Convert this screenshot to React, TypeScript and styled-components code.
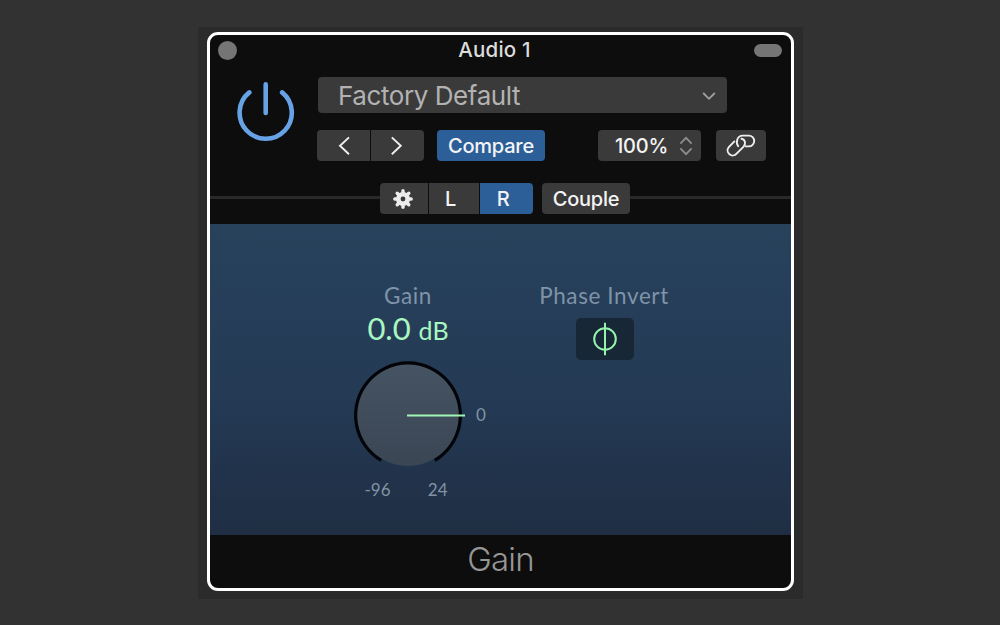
import { useState } from "react";
import styled, { createGlobalStyle } from "styled-components";

const GlobalStyle = createGlobalStyle`
  * {
    box-sizing: border-box;
  }
  body {
    margin: 0;
    background: #323232;
    font-family: Inter, "Liberation Sans", sans-serif;
  }
  button {
    font-family: inherit;
    border: none;
    padding: 0;
    margin: 0;
    cursor: pointer;
  }
  svg {
    display: block;
    flex: none;
  }
`;

const Desktop = styled.main`
  height: 625px;
  display: flex;
  flex-direction: column;
  align-items: flex-start;
  padding: 27px 0 0 198px;
  overflow: hidden;
`;

const Backdrop = styled.div`
  width: 605px;
  height: 572px;
  padding: 5px 9px 8px;
  background: #2b2b2b;
`;

const PluginWindow = styled.section`
  width: 587px;
  height: 559px;
  display: flex;
  flex-direction: column;
  border: 3px solid #fff;
  border-radius: 11px;
  background: #0d0d0d;
  overflow: hidden;
`;

const TitleBar = styled.header`
  height: 31px;
  display: grid;
  grid-template-columns: 28px 1fr 28px;
  align-items: center;
  padding: 0 9px 0 8px;
`;

const Title = styled.h1`
  margin: 0;
  padding: 0 11px 2px 0;
  text-align: center;
  font-size: 20.5px;
  line-height: 28px;
  font-weight: 450;
  letter-spacing: 0.2px;
  color: #dcdcdc;
`;

const CloseDot = styled.button`
  width: 19px;
  height: 19px;
  border-radius: 50%;
  background: #757575;
`;

const Pill = styled.button`
  width: 28px;
  height: 13px;
  border-radius: 7px;
  background: #757575;
`;

const Header = styled.div`
  height: 117px;
  display: flex;
  padding: 11px 0 0 24px;
`;

const PowerButton = styled.button`
  width: 64px;
  height: 68px;
  background: none;
`;

const Controls = styled.div`
  padding-left: 20px;
`;

const Preset = styled.button`
  width: 409px;
  height: 36px;
  display: flex;
  align-items: center;
  justify-content: space-between;
  padding: 1px 11px 0 20px;
  border-radius: 4px;
  background: #3a3a3a;
  color: #b2b2b2;
  font-size: 26px;
  letter-spacing: -0.42px;
`;

const ControlRow = styled.div`
  display: flex;
  margin: 17px 0 0 -1px;
`;

const Button = styled.button<{
  $w: number;
  $gap?: number;
  $shift?: number;
  $active?: boolean;
  $edge?: "left" | "mid" | "right";
}>`
  width: ${(p) => p.$w}px;
  height: 31px;
  margin-left: ${(p) => p.$gap ?? 0}px;
  padding-right: ${(p) => p.$shift ?? 0}px;
  display: flex;
  align-items: center;
  justify-content: center;
  border-radius: ${(p) =>
    p.$edge === "left" ? "4px 0 0 4px" : p.$edge === "mid" ? "0" : p.$edge === "right" ? "0 4px 4px 0" : "4px"};
  background: ${(p) => (p.$active ? "#2c5f98" : "#3a3a3a")};
  color: #f4f4f4;
  font-size: 20px;
  font-weight: 500;
  letter-spacing: -0.25px;
`;

const AmountButton = styled(Button)`
  justify-content: flex-end;
  gap: 11px;
  padding-right: 8px;
`;

const ChannelRow = styled.div`
  height: 41px;
  display: flex;
  align-items: flex-start;
`;

const Rule = styled.div<{ $w?: number }>`
  flex: ${(p) => (p.$w ? `0 0 ${p.$w}px` : "1")};
  height: 3px;
  margin-top: 13px;
  background: #292929;
`;

const Panel = styled.div`
  height: 311px;
  display: grid;
  grid-template-columns: 196px 196px;
  padding: 58px 0 0 100px;
  background: linear-gradient(#28425c, #243a55 55%, #1f2e43);
  font-family: Lato, "Open Sans", sans-serif;
`;

const Param = styled.div`
  display: flex;
  flex-direction: column;
  align-items: center;
`;

const Label = styled.div`
  height: 28px;
  line-height: 28px;
  font-size: 22.5px;
  letter-spacing: 0.6px;
  white-space: nowrap;
  color: #7f93a9;
`;

const Value = styled.div`
  height: 38px;
  line-height: 37px;
  font-size: 31px;
  color: #a9f7c0;
  white-space: nowrap;

  small {
    font-size: 25px;
  }
`;

const KnobRow = styled.div`
  display: grid;
  grid-template-columns: 1fr 110px 1fr;
  align-items: center;
  width: 100%;
  margin-top: 12px;
`;

const Tick = styled.span`
  font-size: 17px;
  line-height: 22px;
  color: #8293a5;
`;

const ZeroTick = styled(Tick)`
  padding-left: 13px;
`;

const Range = styled.div`
  display: flex;
  justify-content: space-between;
  width: 83px;
  margin: 9px 4px 0 0;
`;

const PhaseButton = styled.button`
  width: 58px;
  height: 42px;
  display: flex;
  align-items: center;
  justify-content: center;
  margin: 8px 0 0 1px;
  padding-left: 1px;
  border-radius: 5px;
  background: #182736;
`;

const Footer = styled.footer`
  flex: 1;
  text-align: center;
  font-size: 33px;
  line-height: 48px;
  font-weight: 300;
  letter-spacing: -0.8px;
  color: #969696;
`;

const PowerIcon = () => (
  <svg width="64" height="68" viewBox="0 0 64 68" fill="none" stroke="#68a2e6" strokeWidth="4.6" strokeLinecap="round">
    <path d="M31.7 7.4V36" />
    <path d="M15.3 15.4A26.1 26.1 0 1 0 48.1 15.4" />
  </svg>
);

const ChevronIcon = () => (
  <svg width="14" height="10" viewBox="0 0 14 10" fill="none" stroke="#a0a0a0" strokeWidth="1.8">
    <path d="M1.2 2L7 7.8L12.8 2" />
  </svg>
);

const ArrowIcon = ({ flip }: { flip?: boolean }) => (
  <svg width="12" height="20" viewBox="0 0 12 20" fill="none" stroke="#f0f0f0" strokeWidth="1.9">
    <path d={flip ? "M0.8 1.4L9.8 9.8L0.8 18.2" : "M11 1.4L2 9.8L11 18.2"} />
  </svg>
);

const StepperIcon = () => (
  <svg width="14" height="20" viewBox="0 0 14 20" fill="none" stroke="#8e8e8e" strokeWidth="1.8">
    <path d="M1.4 7.6L7 1.8L12.6 7.6M1.4 12.4L7 18.2L12.6 12.4" />
  </svg>
);

const LinkIcon = () => (
  <svg width="30" height="23" viewBox="0 0 30 23" fill="none" stroke="#eee" strokeWidth="1.9" strokeLinecap="round">
    <path d="M12.2 12.2C9.4 8.4 11.2 1.6 16.6 1.6H22.8A5.4 5.4 0 0 1 22.8 12.4H19.8" />
    <path d="M15.4 4.8C19.4 5.6 20.2 10 17.4 12.8L10.6 19.6A4.8 4.8 0 0 1 2.8 13.2L8.4 7.4" />
  </svg>
);

const GearIcon = () => (
  <svg width="20" height="20" viewBox="-10 -10 20 20">
    <g stroke="#ececec" strokeWidth="3.4" strokeLinecap="round">
      {[0, 45, 90, 135].map((a) => (
        <path key={a} d="M0 -8.2V8.2" transform={`rotate(${a})`} />
      ))}
    </g>
    <circle r="7" fill="#ececec" />
    <circle r="2.4" fill="#3a3a3a" />
  </svg>
);

const Knob = () => (
  <svg width="110" height="110" viewBox="0 0 110 110" fill="none" overflow="visible">
    <defs>
      <linearGradient id="knob" x1="0" y1="0" x2="0" y2="1">
        <stop offset="0" stopColor="#465362" />
        <stop offset="1" stopColor="#3a4654" />
      </linearGradient>
    </defs>
    <circle cx="55" cy="55" r="51" fill="url(#knob)" />
    <path d="M28.2 100.4A52.4 52.4 0 1 1 81.8 100.4" stroke="#020407" strokeWidth="3.2" />
    <path d="M54 55.5H112" stroke="#9ff5b4" strokeWidth="1.8" />
  </svg>
);

const PhaseIcon = () => (
  <svg width="28" height="34" viewBox="0 0 28 34" fill="none" stroke="#95f3ad" strokeWidth="2">
    <circle cx="14" cy="17" r="10.8" />
    <path d="M14 0.8V33.2" />
  </svg>
);

export default function App() {
  const [channel, setChannel] = useState("R");
  const [compare, setCompare] = useState(true);

  return (
    <Desktop>
      <GlobalStyle />
      <Backdrop>
        <PluginWindow>
          <TitleBar>
            <CloseDot />
            <Title>Audio 1</Title>
            <Pill />
          </TitleBar>
          <Header>
            <PowerButton>
              <PowerIcon />
            </PowerButton>
            <Controls>
              <Preset>
                Factory Default
                <ChevronIcon />
              </Preset>
              <ControlRow>
                <Button $w={53} $edge="left">
                  <ArrowIcon />
                </Button>
                <Button $w={53} $gap={1} $shift={2} $edge="right">
                  <ArrowIcon flip />
                </Button>
                <Button $w={108} $gap={13} $active={compare} onClick={() => setCompare(!compare)}>
                  Compare
                </Button>
                <AmountButton $w={103} $gap={53}>
                  100%
                  <StepperIcon />
                </AmountButton>
                <Button $w={50} $gap={15} $shift={1}>
                  <LinkIcon />
                </Button>
              </ControlRow>
            </Controls>
          </Header>
          <ChannelRow>
            <Rule $w={170} />
            <Button $w={48} $edge="left" $shift={2}>
              <GearIcon />
            </Button>
            <Button $w={50} $gap={1} $shift={7} $edge="mid" $active={channel === "L"} onClick={() => setChannel("L")}>
              L
            </Button>
            <Button $w={53} $gap={1} $shift={7} $edge="right" $active={channel === "R"} onClick={() => setChannel("R")}>
              R
            </Button>
            <Button $w={88} $gap={9}>
              Couple
            </Button>
            <Rule />
          </ChannelRow>
          <Panel>
            <Param>
              <Label>Gain</Label>
              <Value>
                0.0 <small>dB</small>
              </Value>
              <KnobRow>
                <span />
                <Knob />
                <ZeroTick>0</ZeroTick>
              </KnobRow>
              <Range>
                <Tick>-96</Tick>
                <Tick>24</Tick>
              </Range>
            </Param>
            <Param>
              <Label>Phase Invert</Label>
              <PhaseButton>
                <PhaseIcon />
              </PhaseButton>
            </Param>
          </Panel>
          <Footer>Gain</Footer>
        </PluginWindow>
      </Backdrop>
    </Desktop>
  );
}
